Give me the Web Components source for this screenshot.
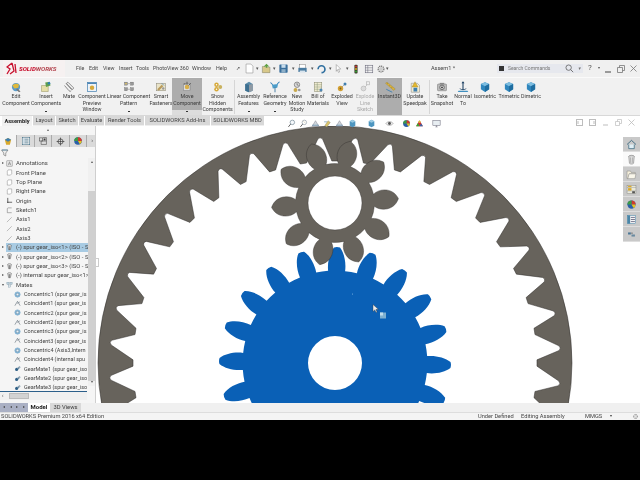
<!DOCTYPE html>
<html><head><meta charset="utf-8">
<style>html,body{margin:0;padding:0;background:#000;overflow:hidden}</style>
</head><body>
<sw-app>
  <sw-titlebar></sw-titlebar>
  <sw-ribbon>
    <sw-cmd w="30" icon="edit">Edit<br>Component</sw-cmd>
    <sw-cmd w="30" icon="insert" dd>Insert<br>Components</sw-cmd>
    <sw-cmd w="16" icon="mate">Mate</sw-cmd>
    <sw-cmd w="30" icon="preview">Component<br>Preview<br>Window</sw-cmd>
    <sw-cmd w="43" icon="pattern" dd>Linear Component<br>Pattern</sw-cmd>
    <sw-cmd w="22" icon="fast">Smart<br>Fasteners</sw-cmd>
    <sw-cmd w="30" icon="move" sel dd>Move<br>Component</sw-cmd>
    <sw-cmd w="31" icon="hidden">Show<br>Hidden<br>Components</sw-cmd>
    <sw-sep></sw-sep>
    <sw-cmd w="25" icon="feat" dd>Assembly<br>Features</sw-cmd>
    <sw-cmd w="28" icon="ref" dd>Reference<br>Geometry</sw-cmd>
    <sw-cmd w="16" icon="motion">New<br>Motion<br>Study</sw-cmd>
    <sw-cmd w="26" icon="bom">Bill of<br>Materials</sw-cmd>
    <sw-cmd w="22" icon="expl">Exploded<br>View</sw-cmd>
    <sw-cmd w="24" icon="line" dim>Explode<br>Line<br>Sketch</sw-cmd>
    <sw-cmd w="25" icon="i3d" sel="full">Instant3D</sw-cmd>
    <sw-cmd w="26" icon="speed">Update<br>Speedpak</sw-cmd>
    <sw-sep></sw-sep>
    <sw-cmd w="22" icon="snap">Take<br>Snapshot</sw-cmd>
    <sw-cmd w="20" icon="normal">Normal<br>To</sw-cmd>
    <sw-cmd w="24" icon="cube">Isometric</sw-cmd>
    <sw-cmd w="24" icon="cube">Trimetric</sw-cmd>
    <sw-cmd w="20" icon="cube">Dimetric</sw-cmd>
  </sw-ribbon>
  <sw-tabs></sw-tabs>
  <sw-main>
    <sw-tree>
      <sw-row ex="r" icon="annot" ind="0">Annotations</sw-row>
      <sw-row icon="plane" ind="0">Front Plane</sw-row>
      <sw-row icon="plane" ind="0">Top Plane</sw-row>
      <sw-row icon="plane" ind="0">Right Plane</sw-row>
      <sw-row icon="origin" ind="0">Origin</sw-row>
      <sw-row icon="sketch" ind="0">Sketch1</sw-row>
      <sw-row icon="axis" ind="0">Axis1</sw-row>
      <sw-row icon="axis" ind="0">Axis2</sw-row>
      <sw-row icon="axis" ind="0">Axis3</sw-row>
      <sw-row ex="r" icon="part" ind="0" sel>(-) spur gear_iso&lt;1&gt; (ISO - S</sw-row>
      <sw-row ex="r" icon="part" ind="0">(-) spur gear_iso&lt;2&gt; (ISO - S</sw-row>
      <sw-row ex="r" icon="part" ind="0">(-) spur gear_iso&lt;3&gt; (ISO - S</sw-row>
      <sw-row ex="r" icon="part" ind="0">(-) internal spur gear_iso&lt;1&gt;</sw-row>
      <sw-row ex="d" icon="mates" ind="0">Mates</sw-row>
      <sw-row icon="conc" ind="1">Concentric1 (spur gear_is</sw-row>
      <sw-row icon="coin" ind="1">Coincident1 (spur gear_is</sw-row>
      <sw-row icon="conc" ind="1">Concentric2 (spur gear_is</sw-row>
      <sw-row icon="coin" ind="1">Coincident2 (spur gear_is</sw-row>
      <sw-row icon="conc" ind="1">Concentric3 (spur gear_is</sw-row>
      <sw-row icon="coin" ind="1">Coincident3 (spur gear_is</sw-row>
      <sw-row icon="conc" ind="1">Concentric4 (Axis3,Intern</sw-row>
      <sw-row icon="coin" ind="1">Coincident4 (internal spu</sw-row>
      <sw-row icon="gmate" ind="1">GearMate1 (spur gear_iso</sw-row>
      <sw-row icon="gmate" ind="1">GearMate2 (spur gear_iso</sw-row>
      <sw-row icon="gmate" ind="1">GearMate3 (spur gear_iso</sw-row>
    </sw-tree>
    <sw-viewport><sw-taskpane></sw-taskpane></sw-viewport>
  </sw-main>
  <sw-sheets></sw-sheets>
  <sw-status></sw-status>
</sw-app>
<script>
const ic={
 edit:'<circle cx="8" cy="8" r="5.5" fill="#5b9bc8"/><path d="M3 6c3-3 7-3 9-1l-1 4-5 1z" fill="#e0b93c"/><path d="M8 11l4 4 2-1-4-4z" fill="#777"/>',
 insert:'<path d="M2 6h9v8H2z" fill="#e6dfa8" stroke="#8a8650" stroke-width=".6"/><path d="M7 2l6-1 1 5-6 2z" fill="#5f9f4c"/><circle cx="12" cy="3" r="1.7" fill="#2f7fb8"/>',
 mate:'<path d="M4 3l7 8a2 2 0 0 0 3-2L7 2a1.5 1.5 0 0 0-2 2l7 7M2 6l6 7a2 2 0 0 0 3 0" fill="none" stroke="#777" stroke-width="1.1"/>',
 preview:'<rect x="2" y="2" width="12" height="12" fill="#eef3f8" stroke="#4d86b5"/><rect x="2" y="2" width="12" height="2" fill="#4d86b5"/><circle cx="8" cy="9" r="3" fill="#d6a93a"/>',
 pattern:'<g fill="#999" stroke="#555" stroke-width=".4"><rect x="2" y="1.5" width="4" height="4"/><rect x="10" y="1.5" width="4" height="4"/><rect x="2" y="9" width="4" height="4"/><rect x="10" y="9" width="4" height="4"/></g><circle cx="4" cy="3.5" r="1.1" fill="#e6c65a"/><path d="M7 3.5h2M7 11h2" stroke="#444" stroke-width=".6"/>',
 fast:'<rect x="2" y="3" width="12" height="10" fill="#e9e3c8" stroke="#8a8677" stroke-width=".7"/><path d="M3 11l6-6 2 2-6 6z" fill="#b89a5a"/><path d="M9 3l3 3" stroke="#4d86b5"/><circle cx="11" cy="10" r="1.6" fill="#999"/>',
 move:'<rect x="3" y="4" width="9" height="9" fill="#ddd" stroke="#666" stroke-width=".6"/><circle cx="8" cy="8" r="3" fill="#d9b04a"/><path d="M8 1v4M4 4h2M13 3l-3 3" stroke="#333" stroke-width=".9" fill="none"/>',
 hidden:'<circle cx="6" cy="5" r="3" fill="#d6a93a"/><circle cx="11" cy="8" r="2.6" fill="#c9b25f"/><circle cx="6" cy="11" r="3" fill="#d6a93a"/><circle cx="6" cy="5" r="1" fill="#fff"/><circle cx="6" cy="11" r="1" fill="#fff"/>',
 feat:'<path d="M3 4l5-3 5 3v9l-5 2-5-2z" fill="#5a8aa8"/><path d="M8 5l5-1v9l-5 2z" fill="#8f9aa4"/><path d="M3 4l5 1v10l-5-2z" fill="#3d6f90"/>',
 ref:'<path d="M4 5l8-1-1 5-6 1z" fill="#4a9cc9"/><path d="M8 8v7" stroke="#4a7fa5" stroke-width="1.3"/><path d="M2 2l3 3M14 1l-3 3" stroke="#2f7fb8" stroke-width="1.4"/>',
 motion:'<circle cx="8" cy="5" r="3.6" fill="#d8d8d8" stroke="#777"/><path d="M8 3v2l2 1" stroke="#333" fill="none" stroke-width=".7"/><circle cx="6" cy="12" r="2.6" fill="#c8a94c"/><circle cx="11" cy="12" r="1.8" fill="#999"/>',
 bom:'<rect x="3" y="2" width="10" height="12" fill="#f2ecd2" stroke="#8a8a70" stroke-width=".7"/><path d="M3 5h10M3 8h10M3 11h10M7 2v12" stroke="#7f8f70" stroke-width=".6"/><circle cx="12" cy="12" r="2" fill="#4d86b5"/>',
 expl:'<circle cx="6" cy="10" r="3.6" fill="#d3a136"/><circle cx="6" cy="10" r="1.2" fill="#7d5d17"/><circle cx="12" cy="4" r="2" fill="#3f7fb0"/><path d="M8 8l3-3" stroke="#666" stroke-width=".6"/>',
 line:'<circle cx="6" cy="10" r="3.2" fill="#dcdcdc" stroke="#bbb"/><rect x="10" y="1" width="4" height="4" fill="none" stroke="#bbb"/><path d="M8 8l3-3" stroke="#bbb"/>',
 i3d:'<path d="M2 3l2-1.5 11 9-2 2z" fill="#d9b23c" stroke="#8c7420" stroke-width=".4"/><path d="M3 11l8 4" stroke="#3f7fb0" stroke-width="1.2"/><path d="M4 4l1-1M7 6.5l1-1M10 9l1-1" stroke="#6a5510" stroke-width=".5"/>',
 speed:'<path d="M3 3h8l3 3v9H3z" fill="#f2ecd2" stroke="#777" stroke-width=".6"/><path d="M8 1l4 7H4z" fill="#e3b72f" stroke="#8c7420" stroke-width=".4"/><rect x="6" y="9" width="5" height="5" fill="#3f7fb0"/>',
 snap:'<rect x="2" y="4" width="12" height="9" rx="1" fill="#bbb" stroke="#666" stroke-width=".6"/><rect x="5" y="2.5" width="6" height="2" fill="#888"/><circle cx="8" cy="8.5" r="3" fill="#ddd" stroke="#444" stroke-width=".9"/><circle cx="8" cy="8.5" r="1.2" fill="#333"/>',
 normal:'<path d="M8 1v11" stroke="#1a3e60" stroke-width="1.4"/><path d="M6 3l2-2.5L10 3z" fill="#1a3e60"/><path d="M2 13h12l1 1.5H1z" fill="#3f8fc0"/><path d="M4 10c0 2 8 2 8 0" fill="none" stroke="#1a3e60"/>',
 cube:'<path d="M8 1.5l5.5 2.5v7L8 14.5 2.5 11V4z" fill="#2f86bd"/><path d="M8 1.5l5.5 2.5L8 7 2.5 4z" fill="#7dbde0"/><path d="M8 7l5.5-3v7L8 14.5z" fill="#1f6da0"/>',
 doc:'<path d="M3 1.5h7l3 3v10H3z" fill="#fff" stroke="#8a8a8a" stroke-width=".8"/>',
 open:'<path d="M2 5h4l1 1h6v8H2z" fill="#d8c88a" stroke="#6a6a50" stroke-width=".6"/><path d="M8 1l4 4H9v2H7V5H4z" fill="#5e9f3e"/>',
 save:'<rect x="2" y="2" width="12" height="12" rx="1" fill="#3a6f9c"/><rect x="5" y="2" width="6" height="5" fill="#c7dcec"/><rect x="5" y="9" width="6" height="5" fill="#8fb0c8"/>',
 print:'<rect x="4" y="2" width="8" height="6" fill="#fff" stroke="#666" stroke-width=".6"/><rect x="2" y="7" width="12" height="6" fill="#4a7ba0"/><rect x="4" y="11" width="8" height="3" fill="#d7e3ec"/>',
 arrow:'<path d="M4 1l8 8H8l2 5-2 1-2-5-2 3z" fill="#fff" stroke="#777" stroke-width=".8"/>',
 light:'<rect x="5.5" y="1" width="5" height="14" rx="1.5" fill="#3a3a2a"/><circle cx="8" cy="4" r="1.5" fill="#d33"/><circle cx="8" cy="8" r="1.5" fill="#e6b820"/><circle cx="8" cy="12" r="1.5" fill="#3a3"/>',
 list:'<rect x="2" y="2" width="12" height="12" fill="#f2f2f2" stroke="#667" stroke-width=".9"/><path d="M2 6h12M2 10h12M6 2v12" stroke="#667" stroke-width=".8"/>',
 gear:'<circle cx="8" cy="8" r="4.6" fill="none" stroke="#777" stroke-width="2" stroke-dasharray="2 1"/><circle cx="8" cy="8" r="2" fill="none" stroke="#888" stroke-width=".8"/>',
 home:'<path d="M1.5 8L8 2l6.5 6" fill="none" stroke="#2d5f78" stroke-width="1.2"/><path d="M4 8v6h8V8" fill="#dfeef5" stroke="#2d5f78"/>',
 partb:'<ellipse cx="8" cy="3.5" rx="4" ry="1.6" fill="#ccc" stroke="#666" stroke-width=".7"/><path d="M4 3.5l1 10c1 1.5 5 1.5 6 0l1-10" fill="#ddd" stroke="#666" stroke-width=".7"/><path d="M6.5 5l.3 8M9.5 5l-.3 8" stroke="#777" stroke-width=".6"/>',
 folder:'<path d="M1.5 3h5l1 2h6v2H5L3 14H1.5z" fill="#f6f0dc" stroke="#7f7f7f" stroke-width=".7"/><path d="M4.5 7h10L13 14H2.5z" fill="#f9f6ea" stroke="#7f7f7f" stroke-width=".7"/>',
 tp:'<rect x="1.5" y="2" width="13" height="12" fill="#e9e9dc" stroke="#777" stroke-width=".6"/><path d="M1.5 5h13M1.5 10h13" stroke="#888" stroke-width=".6"/><rect x="3" y="6" width="5" height="3.5" fill="#d9a92c"/><rect x="9" y="10.5" width="4" height="3" fill="#555"/><rect x="3" y="2.5" width="5" height="2" fill="#d9a92c"/>',
 ball:'<circle cx="8" cy="8" r="6" fill="#2a5fa8"/><path d="M8 2a6 6 0 0 1 6 6H8z" fill="#d13b2e"/><path d="M2 8a6 6 0 0 1 6-6v6z" fill="#3d9b44"/><path d="M8 8h6a6 6 0 0 1-3 5z" fill="#e6c21f"/>',
 tplist:'<rect x="2" y="2" width="12" height="12" fill="#f5f5f5" stroke="#4a86a8" stroke-width=".8"/><rect x="2" y="2" width="4" height="12" fill="#4a86a8"/><path d="M7 5h6M7 8h6M7 11h6" stroke="#446" stroke-width="1"/>',
 small:'<rect x="3" y="5" width="4" height="3" fill="#4a7696"/><rect x="8" y="8" width="5" height="3" fill="#6a8aa0"/><path d="M7 6h3" stroke="#555"/>',
 fm:'<path d="M3 6l5-3 5 3-2 8H5z" fill="#d9a92c"/><path d="M3 6l5-3 5 3-5 3z" fill="#3f7fb0"/>',
 cm:'<rect x="2" y="2" width="12" height="12" fill="#f7f7f7" stroke="#2d5f78" stroke-width=".8"/><path d="M4 5h8M4 8h8M4 11h8" stroke="#2d5f78" stroke-width="1.1"/><rect x="3" y="3" width="3" height="10" fill="#cfdfe8" opacity=".8"/>',
 conf:'<rect x="2.5" y="3" width="5" height="5" fill="none" stroke="#555"/><path d="M8 2.5h5.5V8M5 8v5.5h8.5V8z" fill="none" stroke="#555"/><rect x="9" y="4" width="3" height="3" fill="#3a3a3a"/>',
 target:'<circle cx="8" cy="8" r="4.5" fill="none" stroke="#222" stroke-width="1.1"/><path d="M8 1v14M1 8h14" stroke="#222" stroke-width="1"/>',
 zoom:'<circle cx="9.5" cy="6" r="4" fill="#f4f8fb" stroke="#5a7080" stroke-width="1"/><path d="M6.5 9l-4 5" stroke="#555" stroke-width="1.6"/>',
 zoomb:'<circle cx="9.5" cy="6" r="4" fill="#fff" stroke="#7c8a96" stroke-width="1"/><path d="M6.5 9l-4 5" stroke="#555" stroke-width="1.6"/><path d="M8 4l3 3" stroke="#bb9" />',
 sec:'<path d="M2 13L8 3l6 10z" fill="#cfd7dd" stroke="#667" stroke-width=".7"/><path d="M2 11h12" stroke="#4a7fa5"/>',
 cubes:'<path d="M8 1.5l5 2.5v8L8 14.5 3 12V4z" fill="#4e96c0"/><path d="M8 1.5l5 2.5L8 6.5 3 4z" fill="#9ccbe3"/>',
 cam:'<path d="M3 12L9 3l4 3-6 8z" fill="#d9c36a" stroke="#777" stroke-width=".6"/><path d="M2 5h5" stroke="#4a7fa5"/>',
 eye:'<path d="M1.5 8c3-4.5 10-4.5 13 0-3 4.5-10 4.5-13 0z" fill="#eee" stroke="#666" stroke-width=".7"/><circle cx="8" cy="8" r="2.6" fill="#555"/>',
 scene:'<path d="M8 2l6 11H2z" fill="#c33"/><path d="M2 13l3-6 3 6z" fill="#3a3"/><path d="M8 13l3-5 3 5z" fill="#36a"/><circle cx="8" cy="5" r="2" fill="#e0c030"/>',
 monitor:'<rect x="1.5" y="2.5" width="13" height="9" fill="#e8eef2" stroke="#667" stroke-width=".9"/><path d="M6 14h4M8 11.5V14" stroke="#667"/>',
 annot:'<rect x="2" y="2" width="12" height="12" fill="#eee" stroke="#555" stroke-width=".9"/><path d="M5 12l3-8 3 8M6 9h4" stroke="#444" fill="none" stroke-width=".9"/>',
 plane:'<path d="M5 2h8v9l-3 3H3V5z" fill="#fff" stroke="#666" stroke-width=".9"/>',
 origin:'<path d="M4 2v10h10" fill="none" stroke="#222" stroke-width="1.5"/><circle cx="4" cy="12" r="1.4" fill="#222"/>',
 sketch:'<path d="M3 13V4c0-1 1-2 2-2h8M3 13h10" fill="none" stroke="#555" stroke-width="1"/>',
 axis:'<path d="M2 14L13 3" stroke="#666" stroke-width=".9"/>',
 part:'<ellipse cx="8" cy="3.5" rx="4.3" ry="2" fill="#eee" stroke="#333" stroke-width=".9"/><path d="M4 4l2 9h4l2-9" fill="#ccc" stroke="#333" stroke-width=".9"/><path d="M8 5v8" stroke="#333"/>',
 mates:'<rect x="2" y="3" width="5" height="5" fill="#bcd0dc" stroke="#6a8696" stroke-width=".7"/><rect x="9" y="3" width="5" height="5" fill="#bcd0dc" stroke="#6a8696" stroke-width=".7"/><rect x="5" y="9" width="6" height="5" fill="#dde6ec" stroke="#6a8696" stroke-width=".7"/>',
 conc:'<circle cx="8" cy="8" r="6" fill="#9dc6e2" stroke="#3a80b5" stroke-width="1"/><circle cx="8" cy="8" r="3" fill="#e8f2f9" stroke="#4a6a82" stroke-width="1"/>',
 coin:'<path d="M2 13L8 3l6 10" fill="none" stroke="#50606c" stroke-width="1.3"/><path d="M7 8l7-4" stroke="#50606c" stroke-width="1"/>',
 gmate:'<circle cx="6" cy="10" r="3.5" fill="#2e5f86"/><path d="M7 7l6-4 2 2-5 5z" fill="#6a8aa0"/><circle cx="12" cy="5" r="1.8" fill="#a0b0bc"/>',
 filter:'<path d="M1 2h13L9.5 8v6l-4-2V8z" fill="#eee" stroke="#555" stroke-width="1"/><path d="M2 2h11" stroke="#3a7fa5" stroke-width="1.3"/>'
};
const svg=(n,s)=>`<svg width="${s}" height="${s}" viewBox="0 0 16 16" style="display:block;flex:none">${ic[n]||''}</svg>`;
const FONT='Roboto,"Liberation Sans",sans-serif';
function el(name,css,render){customElements.define(name,class extends HTMLElement{
  connectedCallback(){if(this.shadowRoot)return;const r=this.attachShadow({mode:'open'});r.innerHTML=`<style>${css}</style>`+render(this);}
});}

el('sw-app',`:host{display:flex;flex-direction:column;box-sizing:border-box;width:640px;height:480px;padding:60px 0;background:#000;font:5.3px/6.4px ${FONT};color:#3a3a3a;filter:blur(.35px)}`,()=>`<slot></slot>`);

el('sw-titlebar',`:host{display:flex;align-items:center;height:17px;background:#f0f0f0;flex:none;position:relative}
.logo{display:flex;align-items:center;gap:1px;width:62px;height:17px;margin-left:3px;background:#f6f1f1;font:italic 700 6.2px ${FONT};color:#c8102e;flex:none;box-sizing:border-box;padding-left:3px}
.logo b{font-weight:800;font-style:italic}
.logo span{color:#b3454f;margin-left:1px}
.menu{display:flex;margin-left:11px;width:170px;flex:none}
.menu i{font-style:normal;font-size:5.3px;color:#444;flex:none}
.tools{display:flex;align-items:center;flex:none;width:150px;margin-left:-2px}
.tools>*{flex:none}
.d{font-size:5px;color:#555;width:5px}
.name{width:98px;text-align:center;font-size:5.6px;color:#444;flex:none}
.search{width:86px;height:9px;background:#e6e8ee;display:flex;align-items:center;box-sizing:border-box;padding:0 2px;font-size:5px;color:#777;flex:none;gap:4px;margin-left:5px}
.search u{display:block;width:5px;height:5px;background:#333;flex:none}
.search span{flex:1}
.win{display:flex;align-items:center;flex:1;color:#555;font-size:8px}
.win span{display:block;text-align:center;flex:none}
`,()=>`<div class="logo"><svg width="11" height="13" viewBox="0 0 11 13"><path d="M6 1L1 5l3 2-3 5M6 1l2 8-4 3M9 2l1 9" fill="none" stroke="#c8102e" stroke-width="1.3"/></svg><span><b style="color:#c8102e">SOLID</b>WORKS</span></div>
<div class="menu"><i style="width:13px">File</i><i style="width:14px">Edit</i><i style="width:16px">View</i><i style="width:17px">Insert</i><i style="width:17px">Tools</i><i style="width:39px">PhotoView 360</i><i style="width:24px">Window</i><i style="width:20px">Help</i><i>↗</i></div>
<div class="tools">
<span style="width:12px">${svg('doc',11)}</span><span class="d">▾</span>
<span style="width:12px">${svg('open',11)}</span><span class="d">▾</span>
<span style="width:14px">${svg('save',11)}</span><span class="d">▾</span>
<span style="width:14px">${svg('print',11)}</span><span class="d">▾</span>
<span style="width:13px"><svg width="11" height="11" viewBox="0 0 16 16" style="display:block"><path d="M3 9a5 5 0 1 1 5 5" fill="none" stroke="#2f6f9f" stroke-width="2.4"/></svg></span><span class="d">▾</span>
<span style="width:12px">${svg('arrow',9)}</span><span class="d">▾</span>
<span style="width:13px">${svg('light',10)}</span>
<span style="width:12px">${svg('list',10)}</span>
<span style="width:10px">${svg('gear',10)}</span><span class="d">▾</span>
</div>
<div class="name">Assem1 *</div>
<div class="search"><u></u><span>Search Commands</span><svg width="9" height="9" viewBox="0 0 16 16"><circle cx="6.5" cy="6.5" r="4.8" fill="none" stroke="#555" stroke-width="1.3"/><path d="M10 10l4.5 4.5" stroke="#555" stroke-width="1.4"/></svg><em style="font:normal 4px ${FONT}">▾</em></div>
<div class="win"><span style="width:12px;margin-left:1px;font:700 7px ${FONT}">?</span><span style="width:6px;font-size:4px">▾</span><span style="width:12px"><svg width="6" height="8" viewBox="0 0 6 8" style="display:block;margin:auto"><path d="M0 7h6" stroke="#444"/></svg></span><span style="width:13px"><svg width="8" height="8" viewBox="0 0 8 8" style="display:block;margin:auto"><path d="M.5 2.5h5v5h-5zM2.5 2.5v-2h5v5h-2" fill="none" stroke="#777" stroke-width=".8"/></svg></span><span style="width:12px"><svg width="7" height="7" viewBox="0 0 7 7" style="display:block;margin:auto"><path d="M.5.5l6 6M6.5.5l-6 6" stroke="#777" stroke-width=".8"/></svg></span></div>`);

el('sw-ribbon',`:host{display:flex;height:39px;flex:none;background:#f1f1f1;padding-left:1px;box-sizing:border-box;border-top:1px solid #fafafa;border-bottom:1px solid #d8d8d8}`,()=>`<slot></slot>`);
el('sw-sep',`:host{display:block;width:1px;margin:2px 0 1px 1px;background:#d6d6d6;flex:none;margin-right:1px}`,()=>``);
el('sw-cmd',`:host{display:flex;flex-direction:column;align-items:center;flex:none;width:var(--w);height:37px;text-align:center;white-space:nowrap;padding-top:3px;box-sizing:border-box;position:relative}
:host([sel]){background:linear-gradient(#adadad 0,#adadad 32px,#dcdcdc 32px)}
:host([sel="full"]){background:#adadad}
:host([dim]){color:#aaa}
.t{line-height:6.5px}
.dd{position:absolute;left:50%;top:33px;width:2px;height:1px;margin-left:-1px;background:#333}`,h=>{h.style.setProperty('--w',h.getAttribute('w')+'px');return `${svg(h.getAttribute('icon'),12)}<div class="t"><slot></slot></div>${h.hasAttribute('dd')?'<i class="dd"></i>':''}`});

el('sw-tabs',`:host{display:flex;height:10px;flex:none;background:#fff;align-items:stretch;padding-left:2px;box-sizing:border-box;position:relative;z-index:1}
.t{display:flex;align-items:center;justify-content:center;background:#d8d8d8;margin-right:1px;flex:none;font-size:5.7px;color:#444;border-bottom:1px solid #eee;box-sizing:border-box}
.t.a{background:#f1f1f1;font-weight:700;color:#222;border:none}
.h{display:flex;align-items:center;margin-left:22px;height:14px}
.h span{display:block;flex:none}
.w{display:flex;align-items:center;position:absolute;left:576px;top:2px;height:10px}
.w span{display:block;width:13px;flex:none}`,()=>{
 const t=[['Assembly',30,1],['Layout',22],['Sketch',22],['Evaluate',25],['Render Tools',39],['SOLIDWORKS Add-Ins',65],['SOLIDWORKS MBD',53]];
 const h=[['zoom',12],['zoomb',12],['sec',12],['cam',12],['sec',13],['cubes',19],['cubes',18],['eye',17],['ball',13],['scene',17],['monitor',10]];
 const s='#bdbdbd';
 return t.map(x=>`<div class="t ${x[2]?'a':''}" style="width:${x[1]}px">${x[0]}</div>`).join('')
 +`<div class="h">`+h.map(x=>`<span style="width:${x[1]}px">${svg(x[0],9)}</span>`).join('')+`</div>`
 +`<div class="w"><span><svg width="7" height="7" viewBox="0 0 7 7"><rect x=".5" y=".5" width="6" height="6" fill="none" stroke="${s}"/><path d="M2 2v3" stroke="${s}"/></svg></span><span><svg width="7" height="7" viewBox="0 0 7 7"><rect x=".5" y=".5" width="6" height="6" fill="none" stroke="${s}"/><path d="M5 2v3" stroke="${s}"/></svg></span><span><svg width="7" height="7" viewBox="0 0 7 7"><path d="M1 6h5" stroke="${s}"/></svg></span><span><svg width="7" height="7" viewBox="0 0 7 7"><path d="M.5 2.5h4v4h-4zM2.5 2.5V.5h4v4h-2" fill="none" stroke="${s}" stroke-width=".7"/></svg></span><span><svg width="7" height="7" viewBox="0 0 7 7"><path d="M.5.5l6 6M6.5.5l-6 6" stroke="${s}" stroke-width=".8"/></svg></span></div>`;
});

el('sw-main',`:host{display:flex;height:277px;flex:none;background:#fff}`,()=>`<slot></slot>`);

el('sw-tree',`:host{display:flex;flex-direction:column;width:96px;flex:none;background:#f5f5f5;border-right:1px solid #cfcfcf;box-sizing:border-box;position:relative;overflow:hidden}
.grip{height:9px;flex:none;display:flex;justify-content:center;align-items:center;font-size:4px;color:#666}
.ptabs{display:flex;height:12px;flex:none;background:#dadada;padding-right:8px}
.ptabs span{flex:1;display:flex;align-items:center;justify-content:center;border-right:1px solid #aaa}
.ptabs span:first-child{background:#f5f5f5}
.ptabs em{position:absolute;right:2px;top:8px;font:normal 6px/12px ${FONT};color:#444}
.f{height:11px;padding-left:1px;display:flex;align-items:center;flex:none}
.rows{flex:none;height:233px;width:88px;overflow:hidden;padding-top:1px}
.sb{position:absolute;right:0;top:32px;width:7px;height:228px;background:#f0f0f0;font:normal 4px/8px ${FONT};text-align:center;color:#555}
.sb i{position:absolute;left:0;right:0;top:33px;height:190px;background:#d0d0d0}
.sb u{position:absolute;left:0;right:0;bottom:0;text-decoration:none}
.hs{position:absolute;left:0;right:8px;bottom:3px;height:8px;border-top:1px solid #2c5f8a;background:#f0f0f0}
.hs i{position:absolute;left:9px;width:20px;top:1px;height:6px;background:#d2d2d2;border:1px solid #bbb;box-sizing:border-box}
.hs b{position:absolute;left:2px;top:0;font:normal 5px/7px ${FONT}}`,()=>`<div class="grip">▴</div>
<div class="ptabs"><span>${svg('fm',10)}</span><span>${svg('cm',10)}</span><span>${svg('conf',10)}</span><span>${svg('target',9)}</span><span>${svg('ball',10)}</span><em>›</em></div>
<div class="f">${svg('filter',8)}</div>
<div class="rows"><slot></slot></div>
<div class="sb">▴<i></i><u>▾</u></div><div class="hs"><b>‹</b><i></i></div>`);

el('sw-row',`:host{display:flex;align-items:center;height:9.33px;white-space:nowrap;overflow:hidden;font-size:5.9px;color:#444;position:relative;box-sizing:border-box}
:host([ind="1"]){font-size:5.5px}
:host([sel]){background:linear-gradient(90deg,transparent 6px,#a8cbe3 6px)}
.e{width:6px;flex:none;text-align:center;font-size:4px;color:#555}
.i{flex:none;display:block;width:10px}`,h=>{
 const e=h.getAttribute('ex');const ind=+h.getAttribute('ind');
 return `<span class="e" style="${ind?'margin-left:8px':''}">${e=='r'?'▸':e=='d'?'▾':''}</span><span class="i">${svg(h.getAttribute('icon'),7)}</span><slot></slot>`});

el('sw-viewport',`:host{display:block;flex:1;position:relative;overflow:hidden;background:#fff}
svg{display:block}
.grip{position:absolute;left:0;top:132px;width:3px;height:9px;background:#fff;border:1px solid #ccc;border-left:none;box-sizing:border-box}`,()=>{
 const D=Math.PI/180;const f=n=>n.toFixed(2);
 const P=(cx,cy,r,t,a)=>{const s=Math.sin(a),c=Math.cos(a);return f(cx+r*s+t*c)+' '+f(cy-r*c+t*s)};
 function gear(cx,cy,z,rot,root,prof){
  let d='';
  for(let k=0;k<z;k++){const a=(rot+k*360/z)*D;
    const p=(r,t)=>P(cx,cy,r,t,a);
    const [h,m1,m2,tip,tw]=prof;
    d+=(k?`A${root} ${root} 0 0 1 `:'M')+p(root,-h)+
      `C${p(m1[0],-m1[1])} ${p(m2[0],-m2[1])} ${p(tip,-tw)}`+
      `Q${p(tip+1,0)} ${p(tip,tw)}`+
      `C${p(m2[0],m2[1])} ${p(m1[0],m1[1])} ${p(root,h)}`;
  }
  d+=`A${root} ${root} 0 0 1 `+P(cx,cy,root,-prof[0],rot*D)+'Z';
  return d;
 }
 const cx=335;
 function ring(cy){
  let d=`M${cx-237} ${cy}A237 237 0 1 1 ${cx+237} ${cy}A237 237 0 1 1 ${cx-237} ${cy}Z`;
  const pol=(r,a)=>f(cx+r*Math.sin(a*D))+' '+f(cy-r*Math.cos(a*D));
  for(let k=0;k<40;k++){const a=k*9;
    d+=(k?'L':'M')+pol(202,a-.9)+'L'+pol(202,a+.9)+'L'+pol(224.5,a+5.2-.6)+'Q'+pol(227,a+5.2)+' '+pol(224.5,a+5.2+.6);
  }
  return d+'Z';
 }
 const hole=(x,y,r)=>`M${x-r} ${y}a${r} ${r} 0 1 0 ${2*r} 0a${r} ${r} 0 1 0 ${-2*r} 0Z`;
 const big=gear(cx,363,20,1,92,[8.5,[100,9.5],[110,7.5],115.5,3]);
 const small=gear(cx,203,10,14,39,[6,[45,11.5],[58,11.5],63,1.2]);
 return `<svg width="544" height="277" viewBox="96 126 544 277">
 <path d="${ring(363)}" fill="#67635c" fill-rule="evenodd" stroke="#2f2d2a" stroke-width=".5"/>
 <path d="${big}${hole(cx,363,27)}" fill="#0a60b6" fill-rule="evenodd"/>
 <path d="${small}${hole(cx,203,27)}" fill="#67635c" fill-rule="evenodd" stroke="#2f2d2a" stroke-width=".4"/>
 <circle cx="352.5" cy="294" r=".5" fill="#8fc0e8"/>
 <path d="M373 304.5v7l1.8-1.6 1.3 2.5 1-.5-1.2-2.4 2.4-.2z" fill="#eee" stroke="#333" stroke-width=".4"/>
 <rect x="380" y="312.5" width="6" height="6" fill="#7fb0d0"/><rect x="380" y="312.5" width="3" height="3" fill="#c0dcec"/>
 </svg><div class="grip"></div><slot></slot>`;
});

el('sw-taskpane',`:host{position:absolute;right:0;top:11px;width:17px;display:flex;flex-direction:column;background:#c9c9c9}
span{display:flex;align-items:center;justify-content:center;height:15px;border-bottom:1px solid #dedede;box-sizing:border-box}
.a{background:#fafafa}`,()=>['home','partb','folder','tp','ball','tplist','small'].map((n,i)=>`<span class="${i==1?'a':''}">${svg(n,11)}</span>`).join(''));

el('sw-sheets',`:host{display:flex;height:9px;flex:none;background:#f0f0f0;align-items:stretch}
.n{width:28px;background:#aab0c4;display:flex;align-items:center;justify-content:space-around;font-size:4px;color:#444;padding:0 1px;box-sizing:border-box;flex:none}
.m{width:22px;background:#fff;font-weight:700;font-size:6px;color:#222;display:flex;align-items:center;justify-content:center;flex:none}
.v{width:31px;background:#d9d9d9;font-size:5.8px;display:flex;align-items:center;justify-content:center;flex:none}`,()=>`<div class="n"><span>◂</span><span>◂</span><span>▸</span><span>▸</span></div><div class="m">Model</div><div class="v">3D Views</div>`);

el('sw-status',`:host{display:flex;height:8px;flex:none;align-items:center;background:#f4f4f4;font-size:5.7px;color:#444;border-top:1px solid #ddd;box-sizing:border-box;white-space:nowrap}
.a{width:478px;padding-left:1px;box-sizing:border-box;flex:none}
.b{width:43px;flex:none}.c{width:64px;flex:none}.d{width:25px;flex:none}.e{flex:1}`,()=>`<div class="a">SOLIDWORKS Premium 2016 x64 Edition</div><div class="b">Under Defined</div><div class="c">Editing Assembly</div><div class="d">MMGS</div><div class="e" style="font-size:4px">▾</div><div style="width:8px">${svg('gear',7)}</div>`);
</script>
</body></html>
